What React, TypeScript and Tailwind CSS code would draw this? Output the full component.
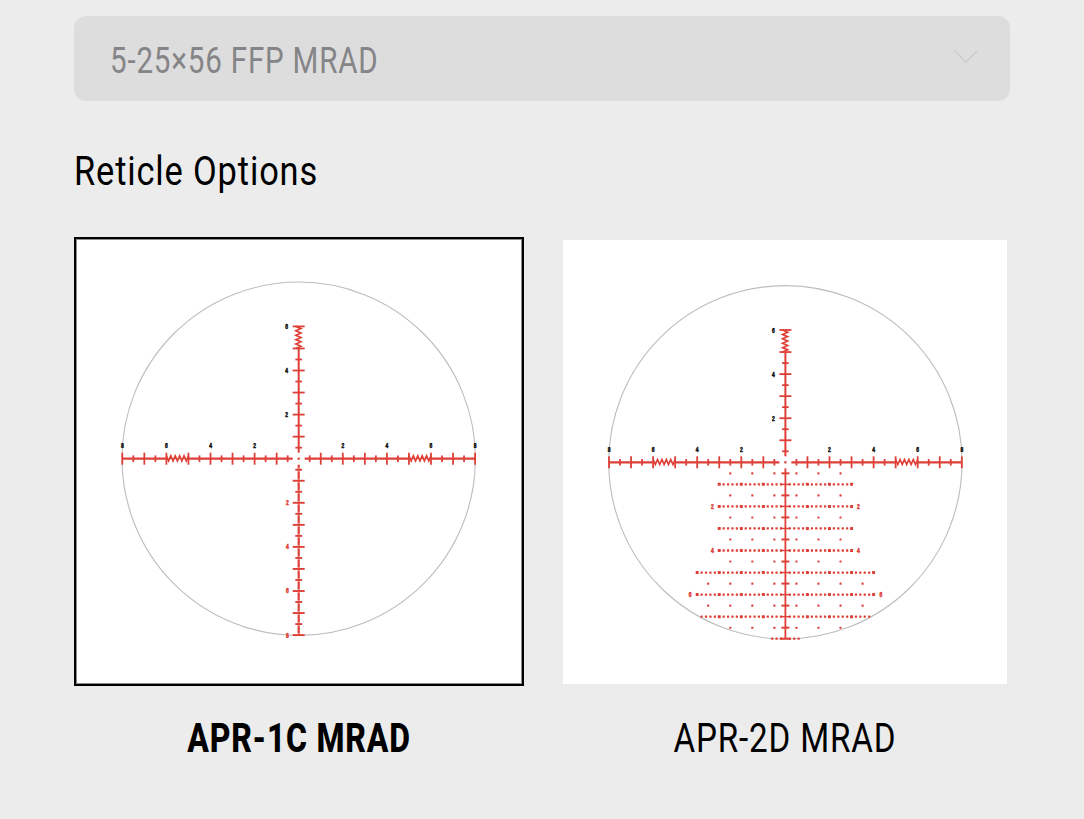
import { clsx } from "clsx";

const RED = "#de4038";
const MRAD = 22.05;
const LABELS = [2, 4, 6, 8];

type Point = { x: number; y: number };

type ReticleProps = {
  center: Point;
  labelY: number;
  hasTree?: boolean;
};

function range(from: number, to: number, step: number) {
  const count = Math.round((to - from) / step);
  return Array.from({ length: count + 1 }, (_, i) => from + i * step);
}

// fine ranging teeth between the 5 and 6 mrad marks
function zigzag(vertical: boolean, sign: number) {
  return range(0, 10, 1)
    .map((i) => {
      const along = sign * (5 + i / 10) * MRAD;
      const across = i % 2 === 0 ? -2.8 : 2.2;
      return vertical ? `${across},${along}` : `${along},${across}`;
    })
    .join(" ");
}

function Digit({ x, y, value, red }: Point & { value: number; red?: boolean }) {
  return (
    <text
      x={x / 0.75}
      y={y + 2.5}
      transform="scale(0.75 1)"
      textAnchor="middle"
      fill={red ? RED : "#111"}
      stroke={red ? RED : "#111"}
      strokeWidth={0.5}
      className="font-['Liberation_Sans',sans-serif] text-[6.6px] font-bold"
    >
      {value}
    </text>
  );
}

function Crosshair() {
  return (
    <g stroke={RED} fill="none">
      {[-1, 1].map((sign) => (
        <g key={sign}>
          <path
            d={`M${sign * 6} 0H${sign * 5 * MRAD}M${sign * 6 * MRAD} 0H${sign * 8 * MRAD}`}
            strokeWidth={2.2}
          />
          <polyline points={zigzag(false, sign)} strokeWidth={1.7} />
          {range(0.5, 8, 0.5)
            .filter((m) => m !== 5.5)
            .map((m) => {
              const size = Number.isInteger(m) ? 6 : 3.3;
              const x = sign * m * MRAD;
              return (
                <path key={m} d={`M${x} ${-size}V${size}`} strokeWidth={1.8} />
              );
            })}
        </g>
      ))}
      <path d={`M0 -6V${-5 * MRAD}`} strokeWidth={2} />
      <polyline points={zigzag(true, -1)} strokeWidth={1.7} />
      {range(0.5, 6, 0.5)
        .filter((m) => m !== 5.5)
        .map((m) => {
          const size = Number.isInteger(m) ? 6 : 3.3;
          return (
            <path
              key={m}
              d={`M${-size} ${-m * MRAD}H${size}`}
              strokeWidth={1.8}
            />
          );
        })}
      <rect x={-1.1} y={-1.1} width={2.2} height={2.2} fill={RED} stroke="none" />
    </g>
  );
}

function Stem() {
  return (
    <g stroke={RED}>
      <path d={`M0 6V${8 * MRAD}`} strokeWidth={2.2} />
      {range(0.5, 8, 0.5).map((m) => {
        const size = Number.isInteger(m) ? 6 : 3.4;
        const y = m * MRAD;
        return (
          <g key={m}>
            <path
              d={`M-2 ${y}H2`}
              stroke="#fff"
              strokeOpacity={0.35}
              strokeWidth={4}
            />
            <path d={`M${-size} ${y}H${size}`} strokeWidth={1.9} />
          </g>
        );
      })}
      {LABELS.map((n) => (
        <Digit key={n} x={-11.4} y={n * MRAD} value={n} red />
      ))}
    </g>
  );
}

const ROWS = [
  { y: 1, extent: 3 },
  { y: 2, extent: 3, label: 2, labelX: 73 },
  { y: 3, extent: 3 },
  { y: 4, extent: 3, label: 4, labelX: 73 },
  { y: 5, extent: 4 },
  { y: 6, extent: 4, label: 6, labelX: 95.4 },
  { y: 7, extent: 3.8 },
  { y: 8, extent: 0.6 },
];

function Dot({ x, y, size }: Point & { size: number }) {
  return (
    <rect
      x={x - size / 2}
      y={y - size / 2}
      width={size}
      height={size}
      rx={0.5}
      fill={RED}
    />
  );
}

function Tree() {
  return (
    <g>
      <path d={`M0 6V${8 * MRAD}`} stroke={RED} strokeWidth={1.8} />
      {ROWS.map(({ y, extent, label, labelX = 0 }) => (
        <g key={y}>
          <path
            d={`M-5 ${y * MRAD}H5`}
            stroke={RED}
            strokeWidth={y === 8 ? 2 : 1.4}
          />
          {range(0.2, extent, 0.2).map((m) => {
            const whole = Math.abs(m - Math.round(m)) < 0.01;
            const size = whole ? 3 : 2.3;
            return (
              <g key={m}>
                <Dot x={-m * MRAD} y={y * MRAD} size={size} />
                <Dot x={m * MRAD} y={y * MRAD} size={size} />
              </g>
            );
          })}
          {label && (
            <>
              <Digit x={-labelX} y={y * MRAD} value={label} red />
              <Digit x={labelX} y={y * MRAD} value={label} red />
            </>
          )}
        </g>
      ))}
      {range(0.5, 7.5, 1).map((y) => (
        <g key={y}>
          <path d={`M-4 ${y * MRAD}H4`} stroke={RED} strokeWidth={2} />
          {range(0.5, y === 5.5 || y === 6.5 ? 3.5 : 2.5, 1).map((x) => (
            <g key={x}>
              <Dot x={-x * MRAD} y={y * MRAD} size={2.1} />
              <Dot x={x * MRAD} y={y * MRAD} size={2.1} />
            </g>
          ))}
        </g>
      ))}
    </g>
  );
}

function Reticle({ center, labelY, hasTree }: ReticleProps) {
  return (
    <svg width={444} height={444} className="block shrink-0">
      <g transform={`translate(${center.x} ${center.y})`}>
        <circle r={176.7} fill="none" stroke="#bdbdbd" strokeWidth={1.1} />
        {hasTree ? <Tree /> : <Stem />}
        <Crosshair />
        {LABELS.map((n) => (
          <g key={n}>
            <Digit x={-n * MRAD} y={labelY} value={n} />
            <Digit x={n * MRAD} y={labelY} value={n} />
            {n < 8 && <Digit x={-12} y={-n * MRAD} value={n} />}
          </g>
        ))}
      </g>
    </svg>
  );
}

function Caption({
  children,
  selected,
}: {
  children: string;
  selected?: boolean;
}) {
  return (
    <p
      className={clsx(
        "mt-8 text-center text-[41px] leading-10 tracking-[1px] whitespace-nowrap",
        selected ? "scale-x-[0.78] font-extrabold" : "scale-x-[0.81]",
      )}
    >
      {children}
    </p>
  );
}

export default function App() {
  return (
    <main className="h-[819px] w-[1084px] overflow-hidden bg-[#ececec] px-[74px] pt-4 font-['Roboto',sans-serif] text-black">
      <button
        disabled
        className="flex h-[85px] w-[936px] items-center justify-between rounded-xl bg-[#dddddd] pr-8 pl-9"
      >
        <span className="origin-left scale-x-[0.82] pt-1 text-[36px] leading-none tracking-[1px] whitespace-nowrap text-[#858587]">
          5-25×56 FFP MRAD
        </span>
        <svg width={24} height={14} className="mb-1" fill="none">
          <path d="M1 1L12 12L23 1" stroke="#cecece" strokeWidth={1.6} />
        </svg>
      </button>

      <h2 className="mt-[51px] h-10 w-fit origin-left scale-x-[0.86] text-[40px] leading-10 tracking-[1px] whitespace-nowrap">
        Reticle Options
      </h2>

      <div className="mt-[45px] flex gap-[39px]">
        <div className="w-[450px]">
          <div className="flex h-[449px] justify-center border-2 border-black bg-white pt-px shadow-[inset_0_0_0_1px_#8c8c8c]">
            <Reticle center={{ x: 221.7, y: 218.7 }} labelY={-13.6} />
          </div>
          <Caption selected>APR-1C MRAD</Caption>
        </div>
        <div className="w-[444px] pt-[3px]">
          <div className="h-[446px] border-b-2 border-[#ececec] bg-white">
            <Reticle center={{ x: 222.4, y: 222.3 }} labelY={-13.2} hasTree />
          </div>
          <Caption>APR-2D MRAD</Caption>
        </div>
      </div>
    </main>
  );
}
